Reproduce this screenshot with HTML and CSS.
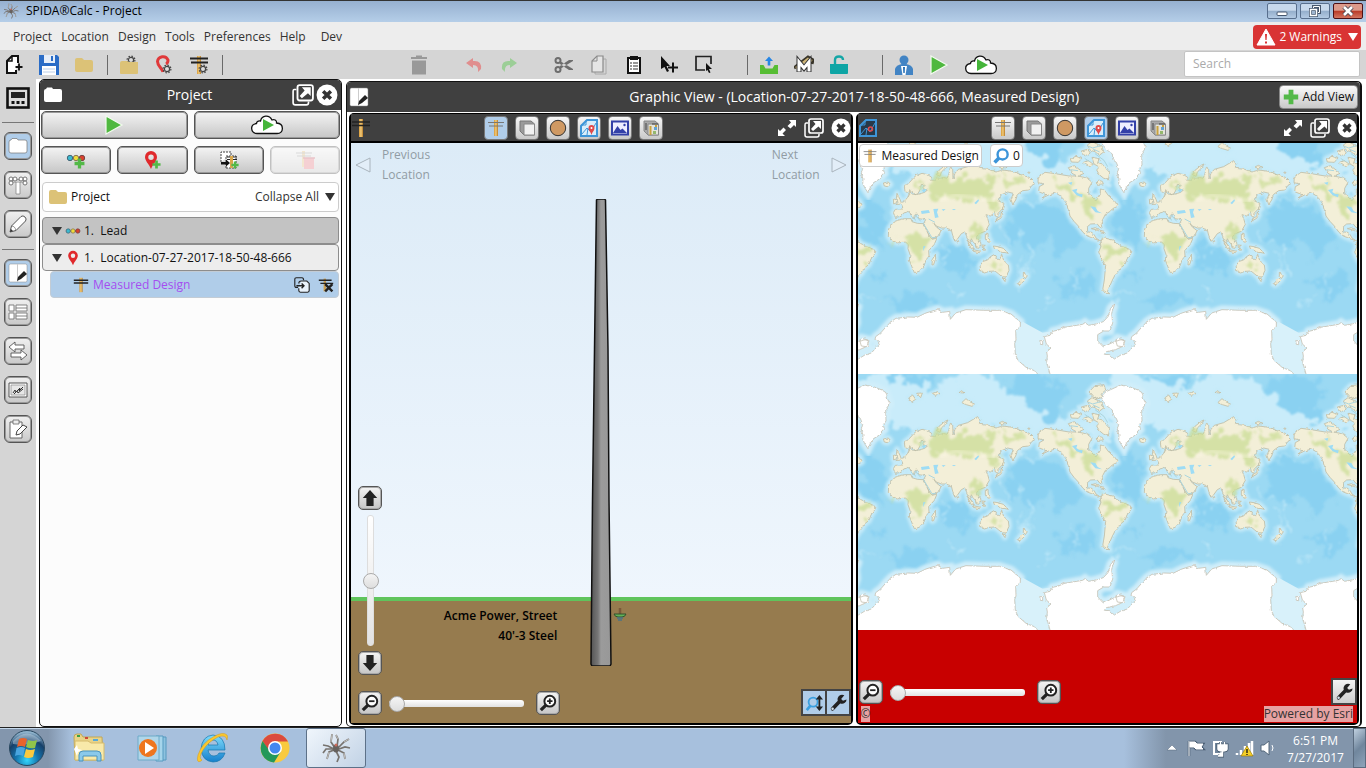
FILE: index.html
```html
<!DOCTYPE html>
<html lang="en">
<head>
<meta charset="utf-8">
<meta name="viewport" content="width=device-width, initial-scale=1">
<title>SPIDA®Calc - Project</title>
<link rel="stylesheet" href="styles.css">
</head>
<body>
<svg class="defs" aria-hidden="true">
  <defs>
    <linearGradient id="g-pole"><stop offset="0" stop-color="#555"/><stop offset=".35" stop-color="#777"/><stop offset=".5" stop-color="#9b9b9b"/><stop offset="1" stop-color="#989898"/></linearGradient>
    <linearGradient id="g-wood"><stop offset="0" stop-color="#d99a35"/><stop offset=".5" stop-color="#f0cb7c"/><stop offset="1" stop-color="#b97a25"/></linearGradient>
    <radialGradient id="g-orb" cx=".5" cy=".85" r=".8"><stop offset="0" stop-color="#35d5fb"/><stop offset=".4" stop-color="#1474ad"/><stop offset=".75" stop-color="#173f68"/><stop offset="1" stop-color="#8fb3cc"/></radialGradient>
    <linearGradient id="g-ie" x2="0" y2="1"><stop offset="0" stop-color="#7fdcfb"/><stop offset="1" stop-color="#1580cd"/></linearGradient>
    <filter id="soft2" x="-10%" y="-10%" width="120%" height="120%"><feGaussianBlur stdDeviation="4"/></filter>
    <filter id="rough" x="-5%" y="-10%" width="110%" height="120%" color-interpolation-filters="sRGB"><feTurbulence type="fractalNoise" baseFrequency=".025" numOctaves="4" seed="4" result="n"/><feDisplacementMap in="SourceGraphic" in2="n" scale="90" xChannelSelector="R" yChannelSelector="G"/><feGaussianBlur stdDeviation="3"/></filter>
    <filter id="coast" x="-5%" y="-10%" width="110%" height="120%" color-interpolation-filters="sRGB"><feTurbulence type="fractalNoise" baseFrequency=".09" numOctaves="2" seed="7" result="n"/><feDisplacementMap in="SourceGraphic" in2="n" scale="9" xChannelSelector="R" yChannelSelector="G"/></filter>
  </defs>
  <symbol id="play" viewBox="0 0 20 20"><path d="M2 1 18 10 2 19Z" fill="#4fb83f" stroke="#f2fbef" stroke-width="1.2"/></symbol>
  <symbol id="cloud" viewBox="0 0 34 20"><path d="M7 18.5H27C34 18.5 34.500 8.500 26.500 8 27 5 24 4 22 5 19-.5 12 0 10.500 6 8 5.500 6.500 7 6.500 8.500-.5 9.500.5 18 7 18.500Z" fill="#fff" stroke="#111" stroke-width="1.3"/><path d="M13 4 24 10 13 16Z" fill="#45b53a"/></symbol>
  <symbol id="folder" viewBox="0 0 20 20"><path d="M1 5Q1 3 3 3H8L10 5H17Q19 5 19 7V15Q19 17 17 17H3Q1 17 1 15Z" fill="#dcc277"/></symbol>
  <symbol id="folder-w" viewBox="0 0 20 20"><path d="M1 6Q1 4 3 4L4 2.500H9L10 4H17Q19 4 19 6V15Q19 17 17 17H3Q1 17 1 15Z" fill="#fff"/></symbol>
  <symbol id="folder-o" viewBox="0 0 20 20"><path d="M1 6Q1 4 3 4L4 2.500H9L10 4H17Q19 4 19 6V15Q19 17 17 17H3Q1 17 1 15Z" fill="#fff" stroke="#777" stroke-width=".7"/></symbol>
  <symbol id="gear" viewBox="0 0 10 10"><circle cx="5" cy="5" r="2.600" fill="#ddd" stroke="#444" stroke-width="1.200"/><circle cx="5" cy="5" r="3.900" fill="none" stroke="#444" stroke-width="1.200" stroke-dasharray="1.500 1.560"/></symbol>
  <symbol id="newdoc" viewBox="0 0 20 20"><path d="M14 8V1H8L3 6V18H12V15" fill="#fff" stroke="#111" stroke-width="2"/><path d="M8 1V6H3" fill="none" stroke="#111" stroke-width="1.500"/><path d="M15 8.500V15.500M11.500 12H18.500" stroke="#111" stroke-width="1.800"/></symbol>
  <symbol id="save" viewBox="0 0 20 20"><path d="M0 0H18L20 2V20H0Z" fill="#2a6cc6"/><path d="M5 0H16V8H5Z" fill="#e6eef9"/><path d="M12 1H14V6H12Z" fill="#2a6cc6"/><path d="M3 11H17V20H3Z" fill="#fff"/><path d="M4 14H16M4 17H16" stroke="#bcd0ea"/></symbol>
  <symbol id="folder-gear" viewBox="0 0 20 20"><use href="#gear" x="7" y="0" width="10" height="10"/><path d="M1 8Q1 6 3 6H8L10 7H19V18Q19 19 18 19H2Q1 19 1 18Z" fill="#dcc277"/></symbol>
  <symbol id="pin" viewBox="0 0 20 20"><path fill-rule="evenodd" d="M10 19C8 14 4 11 4 7A6 6 0 0 1 16 7C16 11 12 14 10 19ZM10 4.500A2.700 2.700 0 1 0 10 10 2.700 2.700 0 1 0 10 4.500" fill="#e0292c"/></symbol>
  <symbol id="pin-gear" viewBox="0 0 20 20"><path d="M9 17C8 13 3.500 11 3.500 6.500A5.500 5.500 0 0 1 14 5Q14 8 12 9" fill="none" stroke="#e0393a" stroke-width="3"/><use href="#gear" x="8" y="9" width="10" height="10"/></symbol>
  <symbol id="pole" viewBox="0 0 20 20"><path d="M8 1H12V19H8Z" fill="url(#g-wood)"/><path d="M1 4H19M1 7.500H19" stroke="#222" stroke-width="1.700"/></symbol>
  <symbol id="pole-lite" viewBox="0 0 20 20"><path d="M8 2H12V18H8Z" fill="url(#g-wood)"/><path d="M2 4.500H18M3 8H17" stroke="#777" stroke-width="1"/></symbol>
  <symbol id="pole-gear" viewBox="0 0 20 20"><path d="M8 1H12V19H8Z" fill="url(#g-wood)"/><path d="M1 3.500H19M2 7.500H19" stroke="#222" stroke-width="2"/><use href="#gear" x="9" y="9" width="10" height="10"/></symbol>
  <symbol id="trash" viewBox="0 0 20 20"><path d="M2 2H7V.5H13V2H18V4H2ZM3 5.500H17V19.500H3Z" fill="#999"/></symbol>
  <symbol id="undo" viewBox="0 0 20 20"><path d="M2 8 9 3V6Q18 5 17 14L14 17Q15 10 9 10V13Z" fill="#e08e8e"/></symbol>
  <symbol id="redo" viewBox="0 0 20 20"><path d="M18 8 11 3V6Q2 5 3 14L6 17Q5 10 11 10V13Z" fill="#9cce97"/></symbol>
  <symbol id="cut" viewBox="0 0 20 20"><g fill="none" stroke="#6d6d6d" stroke-width="2"><circle cx="4" cy="5.500" r="2.500"/><circle cx="4" cy="14.500" r="2.500"/></g><path d="M6 6 19 14V15H15L6 9ZM6 14 19 6V5H15L6 11Z" fill="#6d6d6d"/></symbol>
  <symbol id="copy" viewBox="0 0 20 20"><path d="M8 4H17V19H6V17" fill="none" stroke="#aaa"/><path d="M8 1H14V17H3V6Z" fill="#e5e5e5" stroke="#8a8a8a" stroke-width="1.200"/><path d="M8 1V6H3" fill="none" stroke="#8a8a8a"/></symbol>
  <symbol id="paste" viewBox="0 0 20 20"><path d="M4 3H16V18H4Z" fill="#fff" stroke="#111" stroke-width="2"/><path d="M6 1H14V5H6Z" fill="#111"/><path d="M6 8H8M9 8H14M6 11H8M9 11H14M6 14H8M9 14H14" stroke="#333" stroke-width="1.200"/></symbol>
  <symbol id="cursor-plus" viewBox="0 0 20 20"><path d="M2 1 11 11H7.500L10 16 8 17 5.500 12 2 14Z" fill="#111"/><path d="M14 7.500V17.500M9 12.500H19" stroke="#111" stroke-width="2"/></symbol>
  <symbol id="select" viewBox="0 0 20 20"><path d="M11 15H2V1.500H17V9" fill="none" stroke="#222" stroke-width="1.700"/><path d="M12 8 18 14H15L16.500 17.500 15 18 13.500 15 12 16Z" fill="#111"/></symbol>
  <symbol id="upload" viewBox="0 0 20 20"><path d="M1 10H4.500L6.500 13.500H13.500L15.500 10H19V19H1Z" fill="#57bd34"/><path d="M10 1.500 14 6H11.300V10.500H8.700V6H6Z" fill="#2786e5"/></symbol>
  <symbol id="m-pole" viewBox="0 0 20 20"><path d="M0 13 14 2 19 5 18 9" fill="none" stroke="#39352a" stroke-width="3"/><path d="M2 13 14 4 18 6" fill="none" stroke="#ceb577" stroke-width="2.500"/><path d="M5 17V7L10 13 15 7V17" fill="none" stroke="#333" stroke-width="5"/><path d="M5 16.500V7L10 13 15 7V16.500" fill="none" stroke="#fff" stroke-width="3"/></symbol>
  <symbol id="lock" viewBox="0 0 20 20"><path d="M6 9V5Q6 1.500 10 1.500 14 1.500 14 5" fill="none" stroke="#15a6a6" stroke-width="2.400"/><path d="M1 9H19V18Q19 19 18 19H2Q1 19 1 18Z" fill="#0ea5a5"/></symbol>
  <symbol id="person" viewBox="0 0 20 20"><circle cx="10" cy="5" r="4.500" fill="#4284c4"/><path d="M1 20V14Q2 10 8 9H12Q18 10 19 14V20Z" fill="#4284c4"/><path d="M7 11H13L11.500 20H8.500Z" fill="#fff"/><path d="M9 12H11L10.700 18H9.300Z" fill="#256fb5"/></symbol>
  <symbol id="warn" viewBox="0 0 20 20"><path d="M10 2 19 18H1Z" fill="#fff" stroke="#fff" stroke-linejoin="round"/><path d="M9 7H11L10.600 13H9.400ZM9 14.500H11V16.500H9Z" fill="#d93434"/></symbol>
  <symbol id="popout" viewBox="0 0 20 20"><path d="M4 5H2Q1 5 1 7V17Q1 19 3 19H13Q15 19 15 17V16" fill="none" stroke="#fff" stroke-width="1.500"/><rect x="5" y="1" width="14" height="14" rx="2" fill="none" stroke="#fff" stroke-width="1.700"/><path d="M9 3H17V11L14.500 8.500 9 13 7 11 11.500 6Z" fill="#fff"/></symbol>
  <symbol id="close" viewBox="0 0 20 20"><circle cx="10" cy="10" r="9.500" fill="#fff"/><path d="M6.500 6.500 13.500 13.500M13.500 6.500 6.500 13.500" stroke="#333" stroke-width="3.200"/></symbol>
  <symbol id="expand" viewBox="0 0 20 20"><path d="M12 2H19V9L17 7 13.500 10.500 10.500 8 14 4.500ZM8 18H1V11L3 13 6.500 9.500 9 12 5.500 15.500Z" fill="#fff"/></symbol>
  <symbol id="sheet-pen" viewBox="0 0 20 20"><rect x="1" y="1" width="18" height="18" rx="1.500" fill="#fff" stroke="#888" stroke-width=".5"/><path d="M9.500 1V19" stroke="#ccc"/><path d="M9 18 10 14 16 8 19 11 13 16Z" fill="#222"/></symbol>
  <symbol id="cube" viewBox="0 0 20 20"><path d="M3 3H14L17.500 6V17H7L3 13Z" fill="#9b9b9b" stroke="#777"/><path d="M7 6H17.500V17H7Z" fill="#f1f1f1" stroke="#888"/></symbol>
  <symbol id="disc" viewBox="0 0 20 20"><circle cx="10" cy="10" r="7.700" fill="#cf9963" stroke="#333"/></symbol>
  <symbol id="map" viewBox="0 0 20 20"><path d="M8 2H18V18H2V8Z" fill="#d9eefb" stroke="#3f96d8" stroke-width="2"/><path d="M7 2V7H2M3 16 8 10 12 14 17 5M9 10 8 17" fill="none" stroke="#3f96d8"/><path d="M12.500 17C12 14 9.500 13 9.500 10A3 3 0 0 1 15.500 10C15.500 13 13 14 12.500 17Z" fill="#e04a4a"/><circle cx="12.500" cy="10" r="1" fill="#fff"/></symbol>
  <symbol id="map-dk" viewBox="0 0 20 20"><path d="M8 2H18V18H2V8Z" fill="#273949" stroke="#3f96d8" stroke-width="2"/><path d="M7 2V7H2M3 16 8 10 12 14 17 5M9 10 8 17" fill="none" stroke="#3f96d8"/><circle cx="12.500" cy="11" r="2" fill="none" stroke="#e04a4a" stroke-width="1.500"/></symbol>
  <symbol id="image" viewBox="0 0 20 20"><path d="M2 3.500H18V16.500H2Z" fill="#eef" stroke="#3340a8" stroke-width="2"/><path d="M3 15 7.500 8 10.500 12 12.500 10.500 17 15Z" fill="#3340a8"/><circle cx="14.500" cy="7" r="1.200" fill="#3340a8"/></symbol>
  <symbol id="cube-map" viewBox="0 0 20 20"><path d="M3 3H14L17.500 6V17H7L3 13Z" fill="#a9a9a9" stroke="#888"/><path d="M7 6H17.500V17H7Z" fill="#e4e4dc" stroke="#888"/><path d="M9.500 8V17M15 7V12" stroke="#caa23f" stroke-width="2"/><path d="M5 5V12M11 6H17" stroke="#444"/><path d="M13 9H16V12H13Z" fill="#63a3d4"/><path d="M12 13H15V16H12Z" fill="#94b86d"/></symbol>
  <symbol id="plus" viewBox="0 0 20 20"><path d="M7 1H13V7H19V13H13V19H7V13H1V7H7Z" fill="#53b948"/></symbol>
  <symbol id="lead" viewBox="0 0 20 20"><path d="M2 10H18" stroke="#333"/><circle cx="4" cy="10" r="2.700" fill="#3bb9cf" stroke="#467"/><circle cx="10" cy="10" r="2.700" fill="#f0dc3a" stroke="#875"/><circle cx="16" cy="10" r="2.700" fill="#d9412d" stroke="#744"/></symbol>
  <symbol id="lead-plus" viewBox="0 0 20 20"><use href="#lead" y="-2" width="20" height="20"/><use href="#plus" x="8" y="8" width="11" height="11"/></symbol>
  <symbol id="pin-plus" viewBox="0 0 20 20"><use href="#pin" x="-1" y="0" width="20" height="20"/><use href="#plus" x="10" y="10" width="9" height="9"/></symbol>
  <symbol id="design-copy" viewBox="0 0 20 20"><path d="M2 12V2H12V5M7 18H17V6H7Z" fill="#fff" stroke="#444" stroke-dasharray="2 1"/><path d="M8 7H18M8 9.500H18" stroke="#222"/><path d="M11 6H14V18H11Z" fill="#d9a74b"/><path d="M2 12H7V9.500L11 13 7 16.500V14.500H2Z" fill="#111"/><use href="#plus" x="12" y="11" width="8" height="8"/></symbol>
  <symbol id="design-del" viewBox="0 0 20 20"><path d="M7 1H10V17H7Z" fill="#e5c381"/><path d="M1 3H17M2 6H16" stroke="#999"/><path d="M9 8H19V19H9Z" fill="#e9808a"/><path d="M8 8H20" stroke="#c9606c" stroke-width="1.500"/></symbol>
  <symbol id="calc" viewBox="0 0 24 22"><rect x="1.500" y="1.500" width="21" height="19" fill="#ddd" stroke="#111" stroke-width="2.600"/><path d="M5 5H19V11H5Z" fill="#222"/><path d="M5.500 15.500H8.500M10.500 15.500H13.500M15.500 15.500H18.500" stroke="#111" stroke-width="3"/></symbol>
  <symbol id="insul" viewBox="0 0 20 20"><path d="M8 5H12V19H8Z" fill="#fff" stroke="#888" stroke-width=".8"/><path d="M4 5H16V7H4Z" fill="#fff" stroke="#777" stroke-width=".8"/><g fill="#fff" stroke="#666" stroke-width=".9"><circle cx="3" cy="4" r="2"/><circle cx="3" cy="8" r="2"/><circle cx="17" cy="4" r="2"/><circle cx="17" cy="8" r="2"/><circle cx="7" cy="4" r="2"/><circle cx="13" cy="4" r="2"/></g></symbol>
  <symbol id="pencil" viewBox="0 0 20 20"><path d="M2 18 3.500 12 13 2.500Q15 1 17 3 19 5 17.500 7L8 16.500Z" fill="#fff" stroke="#555"/><path d="M3.500 12Q7 12 8 16.500" fill="none" stroke="#777" stroke-width=".8"/><path d="M2 18 3 15 5 17Z" fill="#333"/></symbol>
  <symbol id="table" viewBox="0 0 20 20"><path d="M1 3H6V9H1ZM1 11H6V17H1ZM8 3H19V9H8ZM8 11H19V17H8ZM8 6H19M8 14H19" fill="#fff" stroke="#777" stroke-width=".9"/></symbol>
  <symbol id="swap" viewBox="0 0 20 20"><path d="M1 6 7 1V4H16V8H7V11ZM19 14 13 9V12H3V16H13V19Z" fill="#fff" stroke="#555" stroke-width=".9"/></symbol>
  <symbol id="chart" viewBox="0 0 20 20"><path d="M1 3H19V17H1Z" fill="#fff" stroke="#555"/><path d="M3 5H17V15H3Z" fill="#e7e7e7" stroke="#888" stroke-width=".7"/><path d="M5 13 7 10 8 12 12 8 11 11 15 7M6 14 9 11 10 13 15 9" fill="none" stroke="#333"/></symbol>
  <symbol id="clip-pen" viewBox="0 0 20 20"><path d="M2 3H14V19H2Z" fill="#fff" stroke="#666"/><path d="M5 1H11V5H5Z" fill="#eee" stroke="#666" stroke-width=".8"/><path d="M8 16 9 12 15 6 19 8 12 15Z" fill="#fff" stroke="#444"/></symbol>
  <symbol id="dup" viewBox="0 0 20 20"><path d="M5 13H3Q1 13 1 11V3Q1 1 3 1H10Q12 1 12 4" fill="none" stroke="#222" stroke-width="1.400"/><path d="M9 5H16L19 8V17Q19 19 17 19H8Q6 19 6 17V14M6 8Q6 5 9 5" fill="#e9f2fb" stroke="#222" stroke-width="1.400"/><path d="M3 11H12M9.500 8 12.500 11 9.500 14" stroke="#222" stroke-width="1.700" fill="none"/></symbol>
  <symbol id="pole-x" viewBox="0 0 20 20"><path d="M7 2H10V18H7Z" fill="#cda052"/><path d="M1 4H17M3 8H19" stroke="#222" stroke-width="1.800"/><path d="M9 9 18 18M18 9 9 18" stroke="#222" stroke-width="3"/></symbol>
  <symbol id="up" viewBox="0 0 20 20"><path d="M10 1 18 10H14V19H6V10H2Z" fill="#222"/></symbol>
  <symbol id="down" viewBox="0 0 20 20"><path d="M10 19 18 10H14V1H6V10H2Z" fill="#222"/></symbol>
  <symbol id="mag-out" viewBox="0 0 20 20"><path d="M8 12 2 18" stroke="#222" stroke-width="3.600"/><circle cx="12" cy="8" r="6" fill="#fff" stroke="#222" stroke-width="2.200"/><path d="M9 8H15" stroke="#222" stroke-width="2"/></symbol>
  <symbol id="mag-in" viewBox="0 0 20 20"><path d="M8 12 2 18" stroke="#222" stroke-width="3.600"/><circle cx="12" cy="8" r="6" fill="#fff" stroke="#222" stroke-width="2.200"/><path d="M9 8H15M12 5V11" stroke="#222" stroke-width="2"/></symbol>
  <symbol id="mag" viewBox="0 0 20 20"><path d="M8 12 2 18" stroke="#3c94d9" stroke-width="4.500"/><circle cx="12" cy="8" r="6.300" fill="#fff" stroke="#3c94d9" stroke-width="3"/></symbol>
  <symbol id="mag-v" viewBox="0 0 20 20"><path d="M6 13 2 18" stroke="#3ba0e0" stroke-width="3"/><circle cx="9" cy="9" r="5" fill="none" stroke="#3ba0e0" stroke-width="2"/><path d="M16 4V16" stroke="#222" stroke-width="2"/><path d="M16 1 20 6H12ZM16 19 20 14H12Z" fill="#222"/></symbol>
  <symbol id="wrench" viewBox="0 0 20 20"><path d="M4 16.500 12 8" stroke="#222" stroke-width="4" stroke-linecap="round"/><path d="M17 1.500A5 5 0 1 0 19.500 6L15.500 7.500 13.500 5.500Z" fill="#222"/><circle cx="4" cy="16.500" r="1.400" fill="#d5e3ef"/></symbol>
  <symbol id="spider" viewBox="0 0 30 30"><g fill="none" stroke="#77736f" stroke-width="1.700"><path d="M14 15 10 9 11 1M16 14 17 6 15 2M17 15 23 9 28 6M18 16 24 14 29 15M17 17 23 20 24 26M15 18 18 24 16 29M13 17 8 19 6 26M13 16 7 13 2 12M12 16 5 16 2 20"/></g><ellipse cx="15" cy="15.500" rx="3" ry="4" fill="#66615e"/><circle cx="15" cy="12" r="1.500" fill="#c96a5a"/><path d="M11 1 10 9M28 6 23 9M23 20 24 26M8 19 6 26M17 6 15 2" stroke="#d6d4d2" stroke-width=".8"/></symbol>
</svg>

<header class="titlebar">
  <svg class="i16"><use href="#spider"/></svg>
  <h1>SPIDA®Calc - Project</h1>
  <div class="winbtns">
    <button type="button" aria-label="Minimize"><svg viewBox="0 0 30 16"><rect x="10" y="9" width="10" height="3.500" rx="1" fill="#fff" stroke="#46576e"/></svg></button>
    <button type="button" aria-label="Restore"><svg viewBox="0 0 30 16"><path d="M13.500 3.500H19.500V9.500H13.500Z" fill="#9fb6d0" stroke="#46576e" stroke-width="3"/><path d="M13.500 3.500H19.500V9.500H13.500Z" fill="none" stroke="#fff"/><path d="M10.500 6.500H16.500V12.500H10.500Z" fill="#9fb6d0" stroke="#46576e" stroke-width="3"/><path d="M10.500 6.500H16.500V12.500H10.500Z" fill="none" stroke="#fff" stroke-width="1.500"/></svg></button>
    <button type="button" class="win-close" aria-label="Close"><svg viewBox="0 0 30 16"><path d="M11 4 19 12M19 4 11 12" stroke="#4d4a55" stroke-width="4.500"/><path d="M11 4 19 12M19 4 11 12" stroke="#fff" stroke-width="2.600"/></svg></button>
  </div>
</header>

<nav class="menubar">
  <a href="#">Project</a><a href="#">Location</a><a href="#">Design</a><a href="#">Tools</a><a href="#">Preferences</a><a href="#">Help</a><a href="#" class="dev">Dev</a>
  <button type="button" class="warnings"><svg class="i20"><use href="#warn"/></svg>2 Warnings<span class="caret"></span></button>
</nav>

<div class="toolbar">
  <div class="tools">
    <button type="button" aria-label="New"><svg><use href="#newdoc"/></svg></button>
    <button type="button" aria-label="Save"><svg><use href="#save"/></svg></button>
    <button type="button" aria-label="Open"><svg><use href="#folder"/></svg></button>
  </div>
  <div class="tools ruled">
    <button type="button" aria-label="Project settings"><svg><use href="#folder-gear"/></svg></button>
    <button type="button" aria-label="Location settings"><svg><use href="#pin-gear"/></svg></button>
    <button type="button" aria-label="Design settings"><svg><use href="#pole-gear"/></svg></button>
  </div>
  <div class="tools ruled edit">
    <button type="button" aria-label="Delete"><svg><use href="#trash"/></svg></button>
    <span class="tools"><button type="button" aria-label="Undo"><svg><use href="#undo"/></svg></button>
    <button type="button" aria-label="Redo"><svg><use href="#redo"/></svg></button></span>
    <span class="tools"><button type="button" aria-label="Cut"><svg><use href="#cut"/></svg></button>
    <button type="button" aria-label="Copy"><svg><use href="#copy"/></svg></button>
    <button type="button" aria-label="Paste"><svg><use href="#paste"/></svg></button>
    <button type="button" aria-label="Add to selection"><svg><use href="#cursor-plus"/></svg></button>
    <button type="button" aria-label="Select area"><svg><use href="#select"/></svg></button></span>
  </div>
  <div class="tools ruled wide">
    <button type="button" aria-label="Upload"><svg><use href="#upload"/></svg></button>
    <button type="button" aria-label="Materials"><svg><use href="#m-pole"/></svg></button>
    <button type="button" aria-label="Unlock"><svg><use href="#lock"/></svg></button>
  </div>
  <div class="tools ruled wide">
    <button type="button" aria-label="User"><svg><use href="#person"/></svg></button>
    <button type="button" aria-label="Run"><svg><use href="#play"/></svg></button>
    <button type="button" class="tool-cloud" aria-label="Run in cloud"><svg><use href="#cloud"/></svg></button>
  </div>
  <input class="search" type="search" placeholder="Search" aria-label="Search">
</div>

<main class="workspace">
  <aside class="rail">
    <button type="button" class="plain" aria-label="Calculator"><svg><use href="#calc"/></svg></button>
    <hr>
    <button type="button" class="on" aria-label="Project"><svg><use href="#folder-o"/></svg></button>
    <button type="button" aria-label="Structure"><svg><use href="#insul"/></svg></button>
    <button type="button" aria-label="Edit"><svg><use href="#pencil"/></svg></button>
    <hr>
    <button type="button" class="on" aria-label="Graphic view"><svg><use href="#sheet-pen"/></svg></button>
    <button type="button" aria-label="Table"><svg><use href="#table"/></svg></button>
    <button type="button" aria-label="Exchange"><svg><use href="#swap"/></svg></button>
    <button type="button" aria-label="Results"><svg><use href="#chart"/></svg></button>
    <button type="button" aria-label="Notes"><svg><use href="#clip-pen"/></svg></button>
  </aside>

  <section class="project">
    <div class="panel-head">
      <svg class="i20"><use href="#folder-w"/></svg>
      <h2>Project</h2>
      <button type="button" class="bare" aria-label="Pop out"><svg class="i22"><use href="#popout"/></svg></button>
      <button type="button" class="bare" aria-label="Close"><svg class="i22"><use href="#close"/></svg></button>
    </div>
    <div class="actions two">
      <button type="button" class="btn" aria-label="Run"><svg class="i20"><use href="#play"/></svg></button>
      <button type="button" class="btn" aria-label="Run in cloud"><svg class="cloud"><use href="#cloud"/></svg></button>
    </div>
    <div class="actions four">
      <button type="button" class="btn" aria-label="Add lead"><svg class="i20"><use href="#lead-plus"/></svg></button>
      <button type="button" class="btn" aria-label="Add location"><svg class="i20"><use href="#pin-plus"/></svg></button>
      <button type="button" class="btn" aria-label="Add design"><svg class="i20"><use href="#design-copy"/></svg></button>
      <button type="button" class="btn" disabled aria-label="Delete design"><svg class="i20"><use href="#design-del"/></svg></button>
    </div>
    <div class="tree">
      <div class="row root"><svg class="i20"><use href="#folder"/></svg><span class="grow">Project</span><button type="button" class="bare collapse">Collapse All<span class="caret dark"></span></button></div>
      <div class="row lead"><span class="caret dark"></span><svg class="i16"><use href="#lead"/></svg><span>1.&nbsp; Lead</span></div>
      <div class="row loc"><span class="caret dark"></span><svg class="i16"><use href="#pin"/></svg><span>1.&nbsp; Location-07-27-2017-18-50-48-666</span></div>
      <div class="row design"><svg class="i16"><use href="#pole"/></svg><a href="#" class="grow">Measured Design</a>
        <button type="button" class="bare" aria-label="Duplicate"><svg class="i16"><use href="#dup"/></svg></button>
        <button type="button" class="bare" aria-label="Remove"><svg class="i16"><use href="#pole-x"/></svg></button></div>
    </div>
  </section>

  <section class="graphic">
    <div class="panel-head big">
      <svg class="i20"><use href="#sheet-pen"/></svg>
      <h2>Graphic View - (Location-07-27-2017-18-50-48-666, Measured Design)</h2>
      <button type="button" class="addview"><svg class="i16"><use href="#plus"/></svg>Add View</button>
    </div>
    <div class="panes">
      <article class="pane">
        <div class="pane-head">
          <svg class="i20"><use href="#pole"/></svg>
          <div class="views">
            <button type="button" class="on" aria-label="Pole"><svg><use href="#pole-lite"/></svg></button>
            <button type="button" aria-label="3D"><svg><use href="#cube"/></svg></button>
            <button type="button" aria-label="Top"><svg><use href="#disc"/></svg></button>
            <button type="button" aria-label="Map"><svg><use href="#map"/></svg></button>
            <button type="button" aria-label="Photo"><svg><use href="#image"/></svg></button>
            <button type="button" aria-label="3D map"><svg><use href="#cube-map"/></svg></button>
          </div>
          <div class="pane-tools">
            <button type="button" class="bare" aria-label="Expand"><svg class="i20"><use href="#expand"/></svg></button>
            <button type="button" class="bare" aria-label="Pop out"><svg class="i20"><use href="#popout"/></svg></button>
            <button type="button" class="bare" aria-label="Close"><svg class="i20"><use href="#close"/></svg></button>
          </div>
        </div>
        <div class="scene">
          <div class="sky">
            <button type="button" class="bare nav"><svg class="i16" viewBox="0 0 16 16"><path d="M15 1V15L1 8Z" fill="#e3eef8" stroke="#a9b4bd"/></svg><span>Previous<br>Location</span></button>
            <button type="button" class="bare nav"><span>Next<br>Location</span><svg class="i16" viewBox="0 0 16 16"><path d="M1 1V15L15 8Z" fill="#e3eef8" stroke="#a9b4bd"/></svg></button>
          </div>
          <div class="ground"><p>Acme Power, Street<br>40'-3 Steel</p></div>
          <svg class="pole-art" viewBox="0 0 22 466" preserveAspectRatio="none"><path d="M6.500 1 7.500 0H14.500L15.500 1 18 150 19 300 21 464 20 466H2L1 464 2.500 300 4.500 150Z" fill="url(#g-pole)" stroke="#111" stroke-width="1.500"/></svg>
          <svg class="anchor-art" viewBox="0 0 14 14"><path d="M7 0V6" stroke="#79593a" stroke-width="2.500"/><path d="M1 6H13Q12 9 9 9H5Q2 9 1 6Z" fill="#60b158" stroke="#33502c"/><path d="M4 10H10M5 12H9" stroke="#4b7485" stroke-width="1.500"/></svg>
          <div class="pan">
            <button type="button" class="btn sq" aria-label="Pan up"><svg><use href="#up"/></svg></button>
            <input type="range" class="vert" value="50" aria-label="Vertical pan">
            <button type="button" class="btn sq" aria-label="Pan down"><svg><use href="#down"/></svg></button>
          </div>
          <div class="zoom">
            <button type="button" class="btn sq" aria-label="Zoom out"><svg><use href="#mag-out"/></svg></button>
            <input type="range" value="0" aria-label="Zoom">
            <button type="button" class="btn sq" aria-label="Zoom in"><svg><use href="#mag-in"/></svg></button>
          </div>
          <div class="corner">
            <button type="button" class="on" aria-label="Fit"><svg><use href="#mag-v"/></svg></button>
            <button type="button" class="on" aria-label="Settings"><svg><use href="#wrench"/></svg></button>
          </div>
        </div>
      </article>

      <article class="pane">
        <div class="pane-head">
          <svg class="i20"><use href="#map-dk"/></svg>
          <div class="views">
            <button type="button" aria-label="Pole"><svg><use href="#pole-lite"/></svg></button>
            <button type="button" aria-label="3D"><svg><use href="#cube"/></svg></button>
            <button type="button" aria-label="Top"><svg><use href="#disc"/></svg></button>
            <button type="button" class="on" aria-label="Map"><svg><use href="#map"/></svg></button>
            <button type="button" aria-label="Photo"><svg><use href="#image"/></svg></button>
            <button type="button" aria-label="3D map"><svg><use href="#cube-map"/></svg></button>
          </div>
          <div class="pane-tools">
            <button type="button" class="bare" aria-label="Expand"><svg class="i20"><use href="#expand"/></svg></button>
            <button type="button" class="bare" aria-label="Pop out"><svg class="i20"><use href="#popout"/></svg></button>
            <button type="button" class="bare" aria-label="Close"><svg class="i20"><use href="#close"/></svg></button>
          </div>
        </div>
        <div class="mapview">
          <svg class="world" role="img" aria-label="World map">
            <defs>
              <clipPath id="tile"><rect x="-800" y="-66" width="4600" height="768"/></clipPath>
              <g id="landforms">
                <path d="M118 232 112 218 118 208 140 207 139 197 130 189 144 185 155 172 160 160 161 149 168 162 180 164 197 160 208 156 214 150 205 148 201 142 206 132 197 134 192 150 185 162 177 164 171 155 158 160 147 154 145 140 160 128 178 108 198 100 215 104 227 112 222 120 234 121 245 111 247 118 262 112 273 115 278 105 283 82 290 85 291 117 297 100 307 88 335 80 365 62 372 72 370 85 398 88 420 96 440 90 470 94 500 106 520 112 538 130 528 136 518 150 500 152 485 163 479 180 470 194 465 178 472 160 455 156 435 165 426 182 444 190 440 206 426 220 425 232 418 228 416 218 403 228 390 224 396 239 400 253 388 274 368 281 362 290 369 302 360 315 350 304 346 296 342 306 350 325 337 312 335 295 326 276 316 281 303 299 298 304 290 286 286 270 270 264 256 264 241 258 232 248 241 261 255 272 248 287 226 298 214 276 202 252 209 239 188 236 184 222 178 223 175 237 168 225 156 214 151 217 143 219 136 229Z"/>
                <path d="M112 246 125 241 145 236 165 236 168 245 184 250 202 251 210 267 219 287 229 298 243 294 235 313 218 332 219 348 210 360 204 378 190 394 175 398 168 381 160 360 162 343 156 326 157 314 149 306 124 309 107 303 97 289 98 267Z"/>
                <path d="M228 375 229 358 238 344 239 355 233 374ZM304 300 308 307 304 309Z"/>
                <path d="M372 376 382 364 395 360 403 350 414 344 421 348 420 357 431 359 437 343 443 361 457 375 459 391 450 411 438 410 427 401 417 393 399 394 386 399 375 395ZM441 415 450 416 446 424ZM502 397 514 407 508 416 502 410ZM499 416 506 421 492 434 485 432Z"/>
                <path d="M333 301 345 312 354 327 346 326ZM352 329 374 334 370 338 352 334ZM358 313 373 302 375 314 368 325 360 323ZM378 315 388 316 382 320 388 331 380 329ZM412 318 426 320 442 325 457 340 444 337 435 338 425 329 416 328ZM388 283 396 283 397 295 403 302 396 307 388 298ZM442 196 448 205 439 210ZM436 213 440 224 434 235 420 243 424 235 434 229ZM112 176 122 180 122 188 113 192ZM123 160 132 178 137 192 120 194 126 187 121 175ZM82 129 97 126 103 133 94 140 85 138Z"/>
                <path d="M547 110 560 102 567 97 598 101 639 108 665 108 689 113 699 119 708 127 698 145 698 159 708 171 719 183 725 176 733 163 733 147 745 150 759 169 778 185 785 199 770 206 761 215 748 223 742 235 735 250 738 264 732 262 723 251 704 252 694 260 695 276 708 277 715 285 720 294 733 303 714 296 694 288 681 277 667 258 654 244 642 228 637 207 631 190 623 178 611 166 599 159 578 165 557 175 570 164 548 155 550 140 564 132 546 128Z"/>
                <path d="M706 266 718 263 733 271 745 274 750 279 738 277 723 270ZM732 302 746 294 770 300 783 311 800 319 824 330 824 342 813 357 807 373 791 386 784 400 776 407 768 423 758 446 754 455 761 461 748 460 740 450 745 420 749 376 735 353 728 336 735 320Z"/>
                <path d="M637 83 655 77 675 92 684 100 665 109 648 100ZM643 56 660 49 677 55 667 67 646 66ZM681 68 696 61 712 73 699 80ZM708 52 730 56 724 70 742 76 761 98 757 120 742 114 730 104 722 90 730 81 714 72ZM676 33 695 28 703 39 687 48ZM694 15 708 5 735 18 744 35 730 46 717 35 703 31ZM699-12 717-31 744-34 749-18 735-5 741 4 718 10ZM725 120 739 124 742 132 724 133ZM242 104 249 91 269 75 276 72 271 82 256 96 252 109ZM317 20 330 8 341 17 357 25 348 31 331 26ZM430 80 440 76 450 82 438 87ZM515 96 522 97 519 101ZM158 6 170-3 179 10 166 18ZM182-8 199-9 194 5ZM229-8 245-13 252-7 238-2ZM309-10 318-16 324-9Z"/>
              </g>
              <path id="greenland" d="M737 10 748-12 775-24 794-33 820-28 846-18 858-10 863 10 870 23 857 40 858 75 850 86 853 100 837 118 822 127 812 140 804 158 796 146 788 130 789 117 784 101 788 85 781 67 771 60 769 42 752 29Z"/>
              <path id="antarctica" d="M590 730 577 684 572 665 574 648 572 636 585 624 571 612 565 590 582 586 590 574 608 570 625 562 650 558 680 553 687 548 698 556 720 552 742 545 756 530 764 505 776 492 767 520 770 548 762 573 743 573 725 584 725 603 742 621 773 606 785 595 804 600 804 617 779 629 751 635 745 643 761 644 775 657 793 646 814 639 836 615 836 604 825 599 827 590 842 579 855 564 873 545 888 535 923 531 951 532 978 519 1013 508 1028 517 1049 514 1051 538 1067 519 1098 509 1153 511 1198 511 1233 522 1261 546 1261 560 1247 571 1248 600 1244 610 1246 643 1254 661 1278 682 1303 692 1313 702V730Z"/>
              <g id="seafloor">
                <path fill="#c9ecfa" d="M0-66H120L240-30 300-66H400L480 0 600 82 650 60 768-40V120L700 170 690 85 550 145 440 90 240 115 90 80 20 100Z"/>
                <path fill="#8ad1f1" d="M100-62H245L230-30 175-42 120-38ZM450-40 550-66 640-30 625 40 600 80 530 40ZM0 200 60 180 90 230 80 300 85 340 60 320 20 280ZM460 205 560 180 630 220 680 300 600 360 580 300 530 330 470 290ZM240 320 315 310 360 370 330 400 250 380ZM80 480 200 455 260 490 130 510ZM600 420 700 400 710 460 640 480ZM40 390 85 400 70 430Z"/>
                <path d="M475 160Q520 205 565 182L610 160M490 345Q505 375 497 400M516 310 531 350 510 400 489 450M270 430 290 450 304 482M248 310Q270 340 257 375M650 385 660 420 654 456M560 490 600 475M10 495 10 470Q70 450 75 480M310 340 320 280M430 260 460 290 490 300" fill="none" stroke="#c8ecfa" stroke-width="4"/>
              </g>
              <g id="relief">
                <path d="M205 120 245 115 285 124 345 115 410 105 425 130 405 160 430 190 408 205 355 176 250 170 206 163ZM115 290 155 295 198 293 223 309 218 328 198 353 177 357 163 318 130 303ZM738 311 765 304 802 330 790 362 762 347 744 344ZM580 116 622 116 660 156 709 175 727 202 715 223 670 194 641 155ZM352 253 378 239 386 264 348 295ZM434 99 509 124 461 132ZM402 370 424 363 441 378 421 382Z"/>
              </g>
              <g id="shelf">
                <g fill="#c6ebf9" stroke="#c6ebf9" stroke-width="18" stroke-linejoin="round" filter="url(#soft2)"><use href="#landforms"/></g>
                <g fill="#d5f0fb" stroke="#d0eefa" stroke-width="26"><use href="#greenland" filter="url(#soft2)"/><use href="#antarctica" filter="url(#soft2)"/></g>
                <path d="M478 575 500 545 560 578 590 574 575 640 590 702H540L480 655Z" fill="#d8f1fa"/>
              </g>
              <g id="continent">
                <use href="#landforms" filter="url(#coast)" fill="#f3efd8" stroke="#bfbda6" stroke-width="2.500" stroke-linejoin="round"/>
                <use href="#relief" fill="#c8dc92" opacity=".7" filter="url(#rough)"/>
                <path d="M250 180 300 166 420 182" fill="none" stroke="#fff9e7" stroke-width="12" opacity=".4" filter="url(#soft2)"/>
                <g fill="#9ddcf5"><path d="M195 213 218 210 222 218 197 222ZM232 207 247 206 243 217 248 232 237 234ZM257 208 269 207 262 213ZM287 207 300 207 294 211ZM355 189 367 178 369 182 360 193ZM648 150 664 146 661 156 670 162 680 163 678 172 662 166ZM703 199 718 201 725 213 738 220 718 217ZM202 319 208 318 201 334ZM197 150 212 146 204 158ZM636 128 649 126 646 135Z"/></g>
                <path d="M202 250 228 293 239 292M178 225 194 244M165 228 180 241M218 237 237 247M695 18 710 24 734 17M717 41 744 61 755 80M643 89 666 92M686 55 701 65M711 27 731 36" fill="none" stroke="#aad5de" stroke-width="3"/>
                <g fill="#fff" stroke="#c5c2b4" stroke-width="2.500" stroke-linejoin="round" filter="url(#coast)"><use href="#greenland"/><use href="#antarctica"/><path d="M12 604 26 599 39 603 31 620 16 618ZM551 602 560 602 560 614 553 613Z"/></g>
              </g>
              <g id="map-row" clip-path="url(#tile)">
                <g filter="url(#rough)"><use href="#seafloor" x="-768"/><use href="#seafloor"/><use href="#seafloor" x="768"/><use href="#seafloor" x="1536"/></g>
                <use href="#shelf" x="-768"/><use href="#shelf"/><use href="#shelf" x="768"/><use href="#shelf" x="1536"/>
                <use href="#continent" x="-768"/><use href="#continent"/><use href="#continent" x="768"/><use href="#continent" x="1536"/>
              </g>
            </defs>
            <rect width="100%" height="100%" fill="#9bd9f3"/>
            <g transform="translate(-2 -3) scale(.33333)"><use href="#map-row"/><use href="#map-row" y="768"/></g>
          </svg>
          <div class="chips">
            <button type="button" class="chip"><svg class="i16"><use href="#pole-lite"/></svg>Measured Design</button>
            <button type="button" class="chip"><svg class="i16"><use href="#mag"/></svg>0</button>
          </div>
          <div class="zoom">
            <button type="button" class="btn sq" aria-label="Zoom out"><svg><use href="#mag-out"/></svg></button>
            <input type="range" value="0" aria-label="Zoom">
            <button type="button" class="btn sq" aria-label="Zoom in"><svg><use href="#mag-in"/></svg></button>
          </div>
          <div class="corner"><button type="button" aria-label="Settings"><svg><use href="#wrench"/></svg></button></div>
          <div class="credits"><span>©</span><a href="#">Powered by Esri</a></div>
        </div>
      </article>
    </div>
  </section>
</main>

<footer class="taskbar">
  <button type="button" class="start" aria-label="Start"><svg viewBox="0 0 38 38"><circle cx="19" cy="19" r="17.500" fill="url(#g-orb)" stroke="#29475f"/><path d="M5 12Q19-3 33 12 20 17 5 15Z" fill="#d6e9f3" opacity=".4"/><path d="M11 10Q15 8 19 10L17 18Q13 16 9 18Z" fill="#e8632c"/><path d="M20 11Q25 13 29 11L27 19Q22 20 18 18Z" fill="#90c44a"/><path d="M8.500 19Q13 17 17 19L15 27Q11 25 7 27Z" fill="#4aa5df"/><path d="M18 20Q22 22 27 20L25 28Q20 30 16 28Z" fill="#fac93e"/></svg></button>
  <button type="button" aria-label="Explorer"><svg viewBox="0 0 36 36"><path d="M3 7Q3 4 6 4H10L12 7H31L32 30H4Z" fill="#e9d387" stroke="#c0a757"/><path d="M6 5H9V7H6Z" fill="#39a046"/><path d="M14 7H17V9H14Z" fill="#cc4938"/><path d="M22 9H27V11H22Z" fill="#58a9d9"/><path d="M4 11H17L20 13H33V30H4Z" fill="#f8e9a9" stroke="#d5bb6c"/><path d="M8 31V25Q8 21 12 21H26Q30 21 30 25V31H26V26H12V31Z" fill="#8ac9ea" stroke="#4b93bd"/><path d="M3 19 6 15 7 19 11 20 7 22 6 26Z" fill="#fff"/></svg></button>
  <button type="button" aria-label="Media player"><svg viewBox="0 0 36 36"><path d="M26 7H33V30H26Z" fill="#8dc2df" stroke="#569ac0"/><path d="M23 6H30V31H23Z" fill="#a6d5eb" stroke="#569ac0"/><path d="M5 6H26V30H5Z" fill="#b0d6e9" stroke="#6daac8"/><circle cx="15" cy="18" r="9" fill="#ee761e"/><path d="M12 12 21 18 12 24Z" fill="#fff"/></svg></button>
  <button type="button" aria-label="Internet Explorer"><svg viewBox="0 0 36 36"><path d="M30 20H13Q14 26 19 26 23 26 24 23H30Q27 32 18 32 7 31 6 19 7 6 18 5 30 6 30 20ZM13 15H23Q22 10 18 10 14 10 13 15Z" fill="url(#g-ie)" stroke="#1777ad" stroke-width=".7"/><path d="M6 31Q1 34 3 25 7 13 18 7 28 1 32 5 33 6 32 10 31 4 23 7 13 12 8 20 3 28 7 30Z" fill="#fac72f" stroke="#d89b14" stroke-width=".5"/></svg></button>
  <button type="button" aria-label="Chrome"><svg viewBox="0 0 36 36"><circle cx="18" cy="18" r="14.500" fill="#f9ca3f"/><path d="M5.500 11A14.500 14.500 0 0 1 31 11.500H18L12 21Z" fill="#db4b3e"/><path d="M5.500 11A14.500 14.500 0 0 0 17 32.500L23.500 22 12 20Z" fill="#23985a"/><circle cx="18" cy="18" r="7" fill="#fff"/><circle cx="18" cy="18" r="5.500" fill="#4387ee"/></svg></button>
  <button type="button" class="active" aria-label="SPIDACalc"><svg class="i30"><use href="#spider"/></svg></button>
  <div class="tray">
    <svg viewBox="0 0 20 20"><path d="M5 12 10 7 15 12Z" fill="#fff" stroke="#50647a" stroke-width=".5"/></svg>
    <svg viewBox="0 0 20 20"><path d="M3 3V18M4 4H9L11 6H17L15 9 17 11H10L8 9H4Z" fill="#fff" stroke="#485c72" stroke-width="2.500"/><path d="M3 3V18M4 4H9L11 6H17L15 9 17 11H10L8 9H4Z" fill="#fff" stroke="#fff"/></svg>
    <svg viewBox="0 0 20 20"><path d="M4 4H11V16H4Z" fill="#73879d" stroke="#fff" stroke-width="2"/><path d="M8 7H17V11Q17 13 12.500 13T8 11ZM10.500 4V7M14.500 4V7M12.500 13V18H8" fill="#fff" stroke="#41566b" stroke-width="3"/><path d="M8 7H17V11Q17 13 12.500 13T8 11ZM10.500 4V7M14.500 4V7M12.500 13V18H8" fill="#fff" stroke="#fff" stroke-width="1.500"/></svg>
    <svg viewBox="0 0 20 20"><path d="M3 15V17M7 12V17M11 8V17M15 5V17M18 3V17" stroke="#fff" stroke-width="2.500"/><path d="M13 8 19 18H7Z" fill="#f6d026" stroke="#9d7d0c" stroke-width=".7"/><path d="M13 11V15M13 16V17" stroke="#111" stroke-width="1.300"/></svg>
    <svg viewBox="0 0 20 20"><path d="M3 7H6L11 3V17L6 13H3Z" fill="#fff" stroke="#53677b"/><path d="M14 7Q16 10 14 13" fill="none" stroke="#fff"/></svg>
  </div>
  <time class="clock">6:51 PM<br>7/27/2017</time>
  <button type="button" class="peek" aria-label="Show desktop"></button>
</footer>
</body>
</html>
```
FILE: styles.css
```css
* { box-sizing: border-box; }
body {
  margin: 0;
  min-height: 100vh;
  display: flex;
  flex-direction: column;
  background: #fff;
  color: #111;
  font: 12px/20px "Open Sans", "Noto Sans", sans-serif;
}
button, input { font: inherit; color: inherit; }
button { padding: 0; border: 0; background: none; display: flex; align-items: center; justify-content: center; }
h1, h2, p { margin: 0; font-weight: 400; }
a { color: inherit; text-decoration: none; }
svg { display: block; flex: none; }
.defs { position: absolute; width: 0; height: 0; }
.i16 { width: 16px; height: 16px; }
.i20 { width: 20px; height: 20px; }
.i22 { width: 22px; height: 22px; }
.i30 { width: 30px; height: 30px; }
.cloud { width: 34px; height: 20px; }
.grow { flex: 1; }

.caret { width: 0; height: 0; border: 5px solid transparent; border-top: 8px solid #fff; border-bottom: 0; }
.caret.dark { border-top-color: #333; }

.btn {
  border: 1px solid #555;
  border-radius: 5px;
  background: linear-gradient(#f4f4f4, #c6c6c6);
}
.actions .btn { box-shadow: inset 0 0 0 1px #999; }
.btn:disabled { opacity: .35; }

/* window chrome */
.titlebar {
  height: 22px;
  display: flex;
  align-items: center;
  padding: 0 3px 2px;
  border-top: 1px solid #333;
  background: linear-gradient(#96b0d0, #b5cee8);
}
.titlebar h1 { flex: 1; margin-left: 7px; font-size: 12px; line-height: 18px; color: #000; }
.winbtns { display: flex; gap: 3px; }
.winbtns button { width: 30px; height: 16px; border: 1px solid #586f8d; border-radius: 2px; background: linear-gradient(#c8d9ec 45%, #94aecb 50%, #b3cae3); }
.winbtns svg { width: 30px; height: 16px; }
.winbtns .win-close { border-color: #4d1015; background: linear-gradient(#dc9a8b 45%, #b93a27 50%, #d37561); }

.menubar { height: 28px; display: flex; align-items: center; gap: 9px; padding: 2px 5px 0 13px; background: #ededed; color: #333; }
.menubar .dev { margin-left: 6px; }
.warnings { height: 24px; margin-left: auto; padding: 0 3px; gap: 3px; border-radius: 4px; background: #d93434; color: #fff; }
.warnings .caret { margin-left: 3px; }

.toolbar { height: 29px; display: flex; align-items: center; padding: 0 6px 0 4px; background: #d5d5d5; }
.tools { display: flex; align-items: center; gap: 15px; }
.tools svg { width: 20px; height: 20px; }
.tools .tool-cloud svg { width: 34px; }
.ruled { margin-left: 13px; padding-left: 11px; border-left: 1px solid #6a6a6a; }
.ruled.edit { gap: 35px; padding-left: 186px; }
.ruled.wide { margin-left: 33px; }
.search { width: 176px; height: 26px; margin: 0 0 2px auto; padding: 0 8px; border: 1px solid #c4c4c4; border-radius: 2px; background: #fff; outline: 0; }
.search::placeholder { color: #aaa; }

/* workspace */
.workspace { flex: 1; display: flex; min-height: 0; background: #fff; }
.rail { width: 36px; display: flex; flex-direction: column; align-items: center; gap: 11px; padding-top: 6px; background: #d5d5d5; }
.rail hr { width: 32px; margin: 0 0 -2px; border: 0; border-top: 1px solid #777; }
.rail button { width: 28px; height: 28px; border: 1px solid #555; border-radius: 6px; background: linear-gradient(#f0f0f0, #c9c9c9); box-shadow: inset 0 0 0 1px #999; }
.rail .on { background: #b0cde9; }
.rail .plain { height: 26px; border: 0; background: none; box-shadow: none; }
.rail svg { width: 20px; height: 20px; }
.rail .plain svg { width: 24px; height: 22px; }

.project { width: 303px; margin: 0 4px 0 3px; border: 1px solid #111; border-radius: 5px; background: #fcfcfc; }
.panel-head { height: 30px; display: flex; align-items: center; gap: 2px; padding: 0 3px; border-radius: 4px 4px 0 0; background: #404040; color: #fff; }
.panel-head h2 { flex: 1; text-align: center; font-size: 14px; padding-left: 24px; }
.actions { display: grid; gap: 6px; padding: 1px 1px 6px; }
.actions .btn { height: 28px; }
.two { grid-template-columns: 1fr 1fr; }
.four { grid-template-columns: repeat(4, 1fr); }
.tree { display: flex; flex-direction: column; padding: 2px 2px 0; }
.row { height: 27px; display: flex; align-items: center; gap: 3px; padding: 0 4px 0 9px; border: 1px solid #8d8d8d; border-radius: 4px; }
.root { height: 30px; margin-bottom: 5px; padding: 0 3px 0 5px; border-color: #ccc; background: #fff; }
.collapse { gap: 6px; color: #333; }
.lead { background: #c3c3c3; }
.loc { background: #ededed; }
.design { margin-left: 8px; padding-left: 22px; gap: 4px; border-color: #c3ccd5; background: #b0cde9; }
.design a { color: #a54df0; }
.design button + button { margin-left: 4px; }

.graphic { flex: 1; min-width: 0; display: flex; flex-direction: column; margin: 2px 4px 0 0; border: 1px solid #111; border-width: 1px 2px 1px 1px; border-radius: 5px; }
.panel-head.big { padding: 0 2px; }
.panel-head.big h2 { padding-left: 60px; }
.addview { height: 24px; gap: 3px; padding: 0 3px; border: 1px solid #888; border-radius: 4px; background: linear-gradient(#fafafa, #c9c9c9); color: #111; }
.panes { flex: 1; display: flex; gap: 3px; padding: 1px 1px 1px 2px; }
.pane { flex: 1; min-width: 0; display: flex; flex-direction: column; border: 2px solid #000; border-top: 1px solid #000; border-radius: 5px; background: #000; }
.pane-head { height: 27px; display: flex; align-items: center; justify-content: space-between; background: #404040; }
.views, .pane-tools { display: flex; align-items: center; gap: 7px; }
.views button { width: 24px; height: 24px; border: 1px solid #777; border-radius: 4px; background: linear-gradient(#f6f6f6, #c9c9c9); }
.views svg { width: 20px; height: 20px; }
.views .on { background: #b0cde9; }

.scene, .mapview { flex: 1; position: relative; margin-top: 2px; overflow: hidden; }
.scene { display: flex; flex-direction: column; }
.sky { flex: 1; display: flex; align-items: flex-start; justify-content: space-between; padding: 2px 4px; background: linear-gradient(#dcebf7, #eff6fd); }
.nav { gap: 11px; color: #919ca4; text-align: left; }
.ground { height: 126px; padding: 5px 0; border-top: 4px solid #5fc45c; background: #967b4e; }
.ground p { width: 41.3%; text-align: right; font-weight: 600; color: #000; }
.pole-art { position: absolute; left: calc(50% - 11px); top: 56px; width: 22px; height: calc(100% - 113px); }
.anchor-art { position: absolute; left: calc(50% + 12px); bottom: 101px; width: 14px; height: 14px; }

/* floating controls */
.sq { width: 24px; height: 24px; border-width: 1px; box-shadow: inset 0 0 0 1px #aaa; }
.sq svg { width: 18px; height: 18px; }
.pan { position: absolute; left: 7px; bottom: 48px; display: flex; flex-direction: column; align-items: center; gap: 5px; }
.zoom { position: absolute; left: 7px; bottom: 8px; display: flex; align-items: center; gap: 7px; }
.mapview .zoom { left: 1px; bottom: 19px; }
input[type="range"] { appearance: none; width: 135px; height: 16px; margin: 0 5px 0 0; background: none; }
input[type="range"]::-webkit-slider-runnable-track { height: 7px; border-radius: 3px; background: linear-gradient(#fff, #e2e2e2); }
input[type="range"]::-webkit-slider-thumb { appearance: none; width: 16px; height: 16px; margin-top: -4px; border: 1px solid #aaa; border-radius: 50%; background: linear-gradient(#f4f4f4, #dedede); }
input.vert { writing-mode: vertical-lr; direction: rtl; width: 16px; height: 131px; margin: 0; }
input.vert::-webkit-slider-runnable-track { width: 7px; height: auto; border: 1px solid #ddd; }
input.vert::-webkit-slider-thumb { margin: 0 0 0 -5px; }
.corner { position: absolute; right: 0; bottom: 7px; display: flex; }
.corner button { width: 26px; height: 27px; border: 2px solid #444; background: linear-gradient(#f3f3f3, #cecece); }
.corner button + button { margin-left: -2px; }
.corner .on { background: #b0cde9; }
.corner svg { width: 18px; height: 18px; }
.mapview { background: #c80000; }
.mapview .corner { bottom: 18px; }
.world { width: 100%; height: 487px; }
.chips { position: absolute; left: 1px; top: 1px; display: flex; gap: 8px; }
.chip { height: 23px; gap: 4px; padding: 0 2px; border: 1px solid #ccc; border-radius: 4px; background: #fff; }
.credits { position: absolute; left: 3px; right: 4px; bottom: 1px; display: flex; justify-content: space-between; line-height: 16px; color: #333; }
.credits > * { background: #e7a2a2; }

/* taskbar */
.taskbar { height: 41px; display: flex; align-items: stretch; border-top: 1px solid #222; box-shadow: inset 0 1px #c3d7eb; background: linear-gradient(90deg, #8396ad 0, #8396ad 48px, #a7c0dd 72px, #a7c0dd calc(100% - 242px), #8295ab calc(100% - 200px), #8295ab); }
.taskbar > button { width: 62px; }
.taskbar > button svg { width: 36px; height: 36px; }
.taskbar > .start { width: 54px; margin-right: 4px; }
.taskbar > .start svg { width: 38px; height: 38px; }
.taskbar > .active { width: 60px; border: 1px solid #5d7188; border-radius: 3px; background: linear-gradient(135deg, #f0f6fc, #c1d2e5); }
.taskbar > .active svg { width: 30px; height: 30px; }
.tray { margin-left: auto; display: flex; align-items: center; gap: 4px; }
.tray svg { width: 20px; height: 20px; }
.clock { width: 75px; text-align: center; line-height: 17px; padding-top: 4px; color: #fff; }
.taskbar > .peek { width: 13px; border: 1px solid #5b6c80; background: linear-gradient(135deg, #c0d0e0, #70869d 50%, #8fa4ba); }
```
